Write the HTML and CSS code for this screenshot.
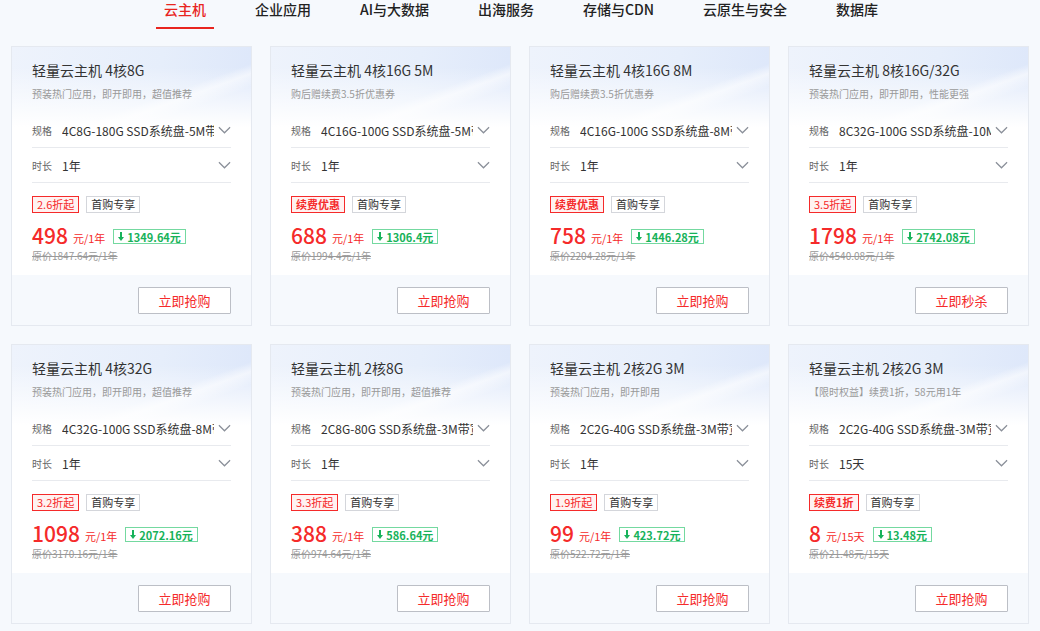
FILE: index.html
```html
<!DOCTYPE html>
<html lang="zh-CN">
<head>
<meta charset="utf-8">
<title>云主机</title>
<link rel="stylesheet" href="styles.css">
</head>
<body>
<nav class="tabs">
  <a class="tab active">云主机</a>
  <a class="tab">企业应用</a>
  <a class="tab">AI与大数据</a>
  <a class="tab">出海服务</a>
  <a class="tab">存储与CDN</a>
  <a class="tab">云原生与安全</a>
  <a class="tab">数据库</a>
</nav>

<main class="grid">
  <section class="card">
    <div class="body">
      <h3 class="title">轻量云主机 4核8G</h3>
      <p class="sub">预装热门应用，即开即用，超值推荐</p>
      <div class="row"><span class="label">规格</span><span class="value">4C8G-180G SSD系统盘-5M带宽</span><svg class="chev" viewBox="0 0 14 8"><polyline points="1,1 7,7 13,1"/></svg></div>
      <div class="row"><span class="label">时长</span><span class="value">1年</span><svg class="chev" viewBox="0 0 14 8"><polyline points="1,1 7,7 13,1"/></svg></div>
      <div class="tags"><span class="tag red">2.6折起</span><span class="tag gray">首购专享</span></div>
      <div class="price"><span class="num">498</span><span class="unit">元/1年</span><span class="save"><svg viewBox="0 0 6 9"><path d="M2 0h2v5h2L3 9 0 5h2z"/></svg>1349.64元</span></div>
      <p class="orig">原价1847.64元/1年</p>
    </div>
    <div class="foot"><button class="btn">立即抢购</button></div>
  </section>

  <section class="card">
    <div class="body">
      <h3 class="title">轻量云主机 4核16G 5M</h3>
      <p class="sub">购后赠续费3.5折优惠券</p>
      <div class="row"><span class="label">规格</span><span class="value">4C16G-100G SSD系统盘-5M带宽</span><svg class="chev" viewBox="0 0 14 8"><polyline points="1,1 7,7 13,1"/></svg></div>
      <div class="row"><span class="label">时长</span><span class="value">1年</span><svg class="chev" viewBox="0 0 14 8"><polyline points="1,1 7,7 13,1"/></svg></div>
      <div class="tags"><span class="tag red strong">续费优惠</span><span class="tag gray">首购专享</span></div>
      <div class="price"><span class="num">688</span><span class="unit">元/1年</span><span class="save"><svg viewBox="0 0 6 9"><path d="M2 0h2v5h2L3 9 0 5h2z"/></svg>1306.4元</span></div>
      <p class="orig">原价1994.4元/1年</p>
    </div>
    <div class="foot"><button class="btn">立即抢购</button></div>
  </section>

  <section class="card">
    <div class="body">
      <h3 class="title">轻量云主机 4核16G 8M</h3>
      <p class="sub">购后赠续费3.5折优惠券</p>
      <div class="row"><span class="label">规格</span><span class="value">4C16G-100G SSD系统盘-8M带宽</span><svg class="chev" viewBox="0 0 14 8"><polyline points="1,1 7,7 13,1"/></svg></div>
      <div class="row"><span class="label">时长</span><span class="value">1年</span><svg class="chev" viewBox="0 0 14 8"><polyline points="1,1 7,7 13,1"/></svg></div>
      <div class="tags"><span class="tag red strong">续费优惠</span><span class="tag gray">首购专享</span></div>
      <div class="price"><span class="num">758</span><span class="unit">元/1年</span><span class="save"><svg viewBox="0 0 6 9"><path d="M2 0h2v5h2L3 9 0 5h2z"/></svg>1446.28元</span></div>
      <p class="orig">原价2204.28元/1年</p>
    </div>
    <div class="foot"><button class="btn">立即抢购</button></div>
  </section>

  <section class="card">
    <div class="body">
      <h3 class="title">轻量云主机 8核16G/32G</h3>
      <p class="sub">预装热门应用，即开即用，性能更强</p>
      <div class="row"><span class="label">规格</span><span class="value">8C32G-100G SSD系统盘-10M带宽</span><svg class="chev" viewBox="0 0 14 8"><polyline points="1,1 7,7 13,1"/></svg></div>
      <div class="row"><span class="label">时长</span><span class="value">1年</span><svg class="chev" viewBox="0 0 14 8"><polyline points="1,1 7,7 13,1"/></svg></div>
      <div class="tags"><span class="tag red">3.5折起</span><span class="tag gray">首购专享</span></div>
      <div class="price"><span class="num">1798</span><span class="unit">元/1年</span><span class="save"><svg viewBox="0 0 6 9"><path d="M2 0h2v5h2L3 9 0 5h2z"/></svg>2742.08元</span></div>
      <p class="orig">原价4540.08元/1年</p>
    </div>
    <div class="foot"><button class="btn">立即秒杀</button></div>
  </section>

  <section class="card">
    <div class="body">
      <h3 class="title">轻量云主机 4核32G</h3>
      <p class="sub">预装热门应用，即开即用，超值推荐</p>
      <div class="row"><span class="label">规格</span><span class="value">4C32G-100G SSD系统盘-8M带宽</span><svg class="chev" viewBox="0 0 14 8"><polyline points="1,1 7,7 13,1"/></svg></div>
      <div class="row"><span class="label">时长</span><span class="value">1年</span><svg class="chev" viewBox="0 0 14 8"><polyline points="1,1 7,7 13,1"/></svg></div>
      <div class="tags"><span class="tag red">3.2折起</span><span class="tag gray">首购专享</span></div>
      <div class="price"><span class="num">1098</span><span class="unit">元/1年</span><span class="save"><svg viewBox="0 0 6 9"><path d="M2 0h2v5h2L3 9 0 5h2z"/></svg>2072.16元</span></div>
      <p class="orig">原价3170.16元/1年</p>
    </div>
    <div class="foot"><button class="btn">立即抢购</button></div>
  </section>

  <section class="card">
    <div class="body">
      <h3 class="title">轻量云主机 2核8G</h3>
      <p class="sub">预装热门应用，即开即用，超值推荐</p>
      <div class="row"><span class="label">规格</span><span class="value">2C8G-80G SSD系统盘-3M带宽</span><svg class="chev" viewBox="0 0 14 8"><polyline points="1,1 7,7 13,1"/></svg></div>
      <div class="row"><span class="label">时长</span><span class="value">1年</span><svg class="chev" viewBox="0 0 14 8"><polyline points="1,1 7,7 13,1"/></svg></div>
      <div class="tags"><span class="tag red">3.3折起</span><span class="tag gray">首购专享</span></div>
      <div class="price"><span class="num">388</span><span class="unit">元/1年</span><span class="save"><svg viewBox="0 0 6 9"><path d="M2 0h2v5h2L3 9 0 5h2z"/></svg>586.64元</span></div>
      <p class="orig">原价974.64元/1年</p>
    </div>
    <div class="foot"><button class="btn">立即抢购</button></div>
  </section>

  <section class="card">
    <div class="body">
      <h3 class="title">轻量云主机 2核2G 3M</h3>
      <p class="sub">预装热门应用，即开即用</p>
      <div class="row"><span class="label">规格</span><span class="value">2C2G-40G SSD系统盘-3M带宽</span><svg class="chev" viewBox="0 0 14 8"><polyline points="1,1 7,7 13,1"/></svg></div>
      <div class="row"><span class="label">时长</span><span class="value">1年</span><svg class="chev" viewBox="0 0 14 8"><polyline points="1,1 7,7 13,1"/></svg></div>
      <div class="tags"><span class="tag red">1.9折起</span><span class="tag gray">首购专享</span></div>
      <div class="price"><span class="num">99</span><span class="unit">元/1年</span><span class="save"><svg viewBox="0 0 6 9"><path d="M2 0h2v5h2L3 9 0 5h2z"/></svg>423.72元</span></div>
      <p class="orig">原价522.72元/1年</p>
    </div>
    <div class="foot"><button class="btn">立即抢购</button></div>
  </section>

  <section class="card">
    <div class="body">
      <h3 class="title">轻量云主机 2核2G 3M</h3>
      <p class="sub">【限时权益】续费1折，58元用1年</p>
      <div class="row"><span class="label">规格</span><span class="value">2C2G-40G SSD系统盘-3M带宽</span><svg class="chev" viewBox="0 0 14 8"><polyline points="1,1 7,7 13,1"/></svg></div>
      <div class="row"><span class="label">时长</span><span class="value">15天</span><svg class="chev" viewBox="0 0 14 8"><polyline points="1,1 7,7 13,1"/></svg></div>
      <div class="tags"><span class="tag red strong">续费1折</span><span class="tag gray">首购专享</span></div>
      <div class="price"><span class="num">8</span><span class="unit">元/15天</span><span class="save"><svg viewBox="0 0 6 9"><path d="M2 0h2v5h2L3 9 0 5h2z"/></svg>13.48元</span></div>
      <p class="orig">原价21.48元/15天</p>
    </div>
    <div class="foot"><button class="btn">立即抢购</button></div>
  </section>
</main>
</body>
</html>
```

FILE: styles.css
```css
* { box-sizing: border-box; }

html, body {
  margin: 0;
  padding: 0;
  background: #f6f9fd;
  font-family: "Noto Sans CJK SC", "Noto Sans", "Liberation Sans", sans-serif;
  color: #333;
}

.tabs {
  display: flex;
  justify-content: center;
  gap: 49px;
  height: 29px;
  padding-left: 2px;
}

.tab {
  position: relative;
  font-size: 14px;
  line-height: 18px;
  font-weight: 500;
  color: #222;
  cursor: pointer;
}

.tab.active {
  color: #e8251f;
}

.tab.active::after {
  content: "";
  position: absolute;
  left: -8px;
  right: -8px;
  top: 27px;
  height: 2px;
  background: #e8251f;
}

.grid {
  display: grid;
  grid-template-columns: repeat(4, 241px);
  column-gap: 18px;
  row-gap: 18px;
  padding: 17px 0 0 11px;
}

.card {
  height: 280px;
  border: 1px solid #e5e9f0;
  background: #fff;
  display: flex;
  flex-direction: column;
}

.body {
  flex: 1;
  padding: 13px 20px 0 20px;
  background:
    linear-gradient(160deg, rgba(255,255,255,0) 62%, rgba(255,255,255,0.55) 68%, rgba(255,255,255,0) 76%) top / 100% 80px no-repeat,
    linear-gradient(100deg, #eef3fc 0%, #e6eefb 60%, #dde7fa 100%) top / 100% 80px no-repeat,
    #fff;
  position: relative;
}

.body::before {
  content: "";
  position: absolute;
  left: 0; right: 0; top: 20px; height: 60px;
  background: linear-gradient(180deg, rgba(255,255,255,0) 0%, #fff 100%);
}

.body > * { position: relative; }

.title {
  margin: 0;
  font-size: 14px;
  line-height: 20px;
  font-weight: 400;
  color: #333;
}

.sub {
  margin: 6px 0 0;
  font-size: 10px;
  line-height: 16px;
  color: #999;
  white-space: nowrap;
}

.row {
  display: flex;
  align-items: center;
  height: 35px;
  border-bottom: 1px solid #e8eaee;
}

.row:first-of-type { margin-top: 11px; }

.label {
  width: 30px;
  flex: none;
  font-size: 10px;
  color: #666;
}

.value {
  width: 152px;
  overflow: hidden;
  white-space: nowrap;
  font-size: 12px;
  color: #333;
}

.chev {
  margin-left: auto;
  width: 13px;
  height: 8px;
  fill: none;
  stroke: #8a8f99;
  stroke-width: 1.3;
}

.tags {
  display: flex;
  gap: 7px;
  margin-top: 13px;
}

.tag {
  height: 17px;
  padding: 0 4px;
  font-size: 11px;
  line-height: 15px;
  border: 1px solid;
}

.tag.red {
  color: #f52a2a;
  border-color: #f52a2a;
  background: #fff2f1;
}

.tag.red.strong { font-weight: 700; }

.tag.gray {
  color: #333;
  border-color: #d4d6db;
  background: #fff;
}

.price {
  display: flex;
  align-items: center;
  margin-top: 10px;
  height: 24px;
}

.num {
  font-size: 21px;
  font-weight: 500;
  color: #f52a2a;
  line-height: 24px;
}

.unit {
  margin-left: 5px;
  margin-top: 5px;
  font-size: 11px;
  color: #f52a2a;
}

.save {
  display: inline-flex;
  align-items: center;
  gap: 3px;
  margin-left: 8px;
  margin-top: 3px;
  height: 15px;
  padding: 0 4px;
  border: 1px solid #74d9a0;
  color: #17b25a;
  font-size: 11px;
  font-weight: 700;
}

.save svg {
  width: 6px;
  height: 9px;
  fill: #17b25a;
}

.orig {
  margin: 1px 0 0;
  font-size: 10px;
  line-height: 16px;
  color: #999;
  text-decoration: line-through;
}

.foot {
  height: 50px;
  background: #f6f9fd;
  display: flex;
  align-items: center;
  justify-content: flex-end;
  padding-right: 20px;
}

.btn {
  width: 93px;
  height: 27px;
  border: 1px solid #bcbfc6;
  border-radius: 1px;
  background: #fff;
  color: #f52a2a;
  font-family: inherit;
  font-size: 13px;
  cursor: pointer;
}
```
